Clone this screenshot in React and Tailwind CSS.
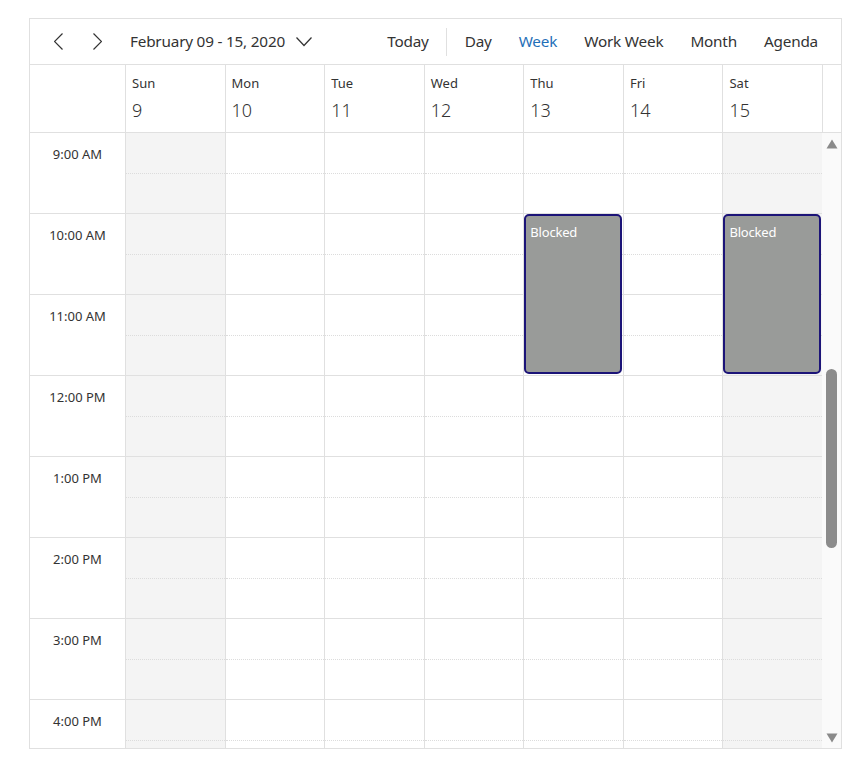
import React from "react";

const days = [
  { name: "Sun", num: "9", weekend: true },
  { name: "Mon", num: "10" },
  { name: "Tue", num: "11" },
  { name: "Wed", num: "12" },
  { name: "Thu", num: "13", blocked: true },
  { name: "Fri", num: "14" },
  { name: "Sat", num: "15", weekend: true, blocked: true },
];

const hours = ["9:00 AM", "10:00 AM", "11:00 AM", "12:00 PM", "1:00 PM", "2:00 PM", "3:00 PM", "4:00 PM"];

const font = { fontFamily: '"Noto Sans", "Open Sans", sans-serif' };

function Chevron({ dir }) {
  const d = dir === "left" ? "M8.5 0.5 L0.5 8.5 L8.5 16.5" : "M0.5 0.5 L8.5 8.5 L0.5 16.5";
  return (
    <svg width="9" height="17" viewBox="0 0 9 17" fill="none" stroke="#333" strokeWidth="1.2">
      <path d={d} />
    </svg>
  );
}

export default function App() {
  return (
    <div className="w-[853px] h-[777px] bg-white pt-[18px] pl-[29px]" style={font}>
      <div className="w-[813px] h-[731px] border border-[#e0e0e0] flex flex-col overflow-hidden">
        {/* Toolbar */}
        <div className="h-[46px] shrink-0 border-b border-[#e0e0e0] flex items-center text-[15.3px] text-[#333]">
          <div className="w-[20px]" />
          <button className="w-[14px] h-[20px] flex items-center justify-center ml-[1px]">
            <Chevron dir="left" />
          </button>
          <button className="w-[14px] h-[20px] flex items-center justify-center ml-[25px]">
            <Chevron dir="right" />
          </button>
          <div className="ml-[26px] flex items-center tracking-[-0.2px]">
            <span>February 09 - 15, 2020</span>
            <svg className="ml-[11px]" width="16" height="10" viewBox="0 0 16 10" fill="none" stroke="#333" strokeWidth="1.2">
              <path d="M0.5 0.5 L8 8.5 L15.5 0.5" />
            </svg>
          </div>
          <div className="flex-1" />
          <div className="flex items-center tracking-[-0.2px]">
            <span className="px-[13.5px]">Today</span>
            <span className="w-px h-[28px] bg-[#e0e0e0] mx-[4px]" />
            <span className="px-[13.5px]">Day</span>
            <span className="px-[13.5px] text-[#1f6fb8]">Week</span>
            <span className="px-[13.5px]">Work Week</span>
            <span className="px-[13.5px]">Month</span>
            <span className="px-[13.5px]">Agenda</span>
          </div>
          <div className="w-[9.5px]" />
        </div>

        {/* Header */}
        <div className="h-[68px] shrink-0 border-b border-[#e0e0e0] flex">
          <div className="w-[95px] shrink-0" />
          {days.map((d) => (
            <div key={d.name} className="flex-1 border-l border-[#e0e0e0] pl-[6px] pt-[9px] text-[#333]">
              <div className="text-[13px] leading-[18px]">{d.name}</div>
              <div className="text-[18px] leading-[24px] mt-[6px] font-light">{d.num}</div>
            </div>
          ))}
          <div className="w-[19px] shrink-0 border-l border-[#e0e0e0]" />
        </div>

        {/* Body */}
        <div className="flex-1 flex overflow-hidden">
          <div className="w-[95px] shrink-0">
            {hours.map((h) => (
              <div key={h} className="h-[81px] border-b border-[#e0e0e0] text-center text-[13px] text-[#333] pt-[12px] leading-[18px]">
                {h}
              </div>
            ))}
          </div>
          {days.map((d) => (
            <div key={d.name} className={`flex-1 relative border-l border-[#e0e0e0] ${d.weekend ? "bg-[#f4f4f4]" : "bg-white"}`}>
              {hours.map((h) => (
                <div key={h}>
                  <div className="h-[41px] border-b border-dotted border-[#dcdcdc]" />
                  <div className="h-[40px] border-b border-[#e0e0e0]" />
                </div>
              ))}
              {d.blocked && (
                <div className="absolute left-0 right-px top-[81px] h-[160px] rounded-[5px] border-2 border-[#1c1478] bg-[#999b99] text-white text-[13px] leading-[18px] pl-[4px] pt-[7px] tracking-[-0.2px]">
                  Blocked
                </div>
              )}
            </div>
          ))}
          <div className="w-[19px] shrink-0 relative bg-[#fafafa]">
            <svg className="absolute left-[4px] top-[6px]" width="12" height="10" viewBox="0 0 12 10">
              <path d="M6 0.5 L11.5 9.5 L0.5 9.5 Z" fill="#8a8a8a" />
            </svg>
            <div className="absolute left-[4px] w-[11px] top-[236px] h-[179px] rounded-full bg-[#8c8c8c]" />
            <svg className="absolute left-[4px] top-[600px]" width="12" height="10" viewBox="0 0 12 10">
              <path d="M0.5 0.5 L11.5 0.5 L6 9.5 Z" fill="#8a8a8a" />
            </svg>
          </div>
        </div>
      </div>
    </div>
  );
}
